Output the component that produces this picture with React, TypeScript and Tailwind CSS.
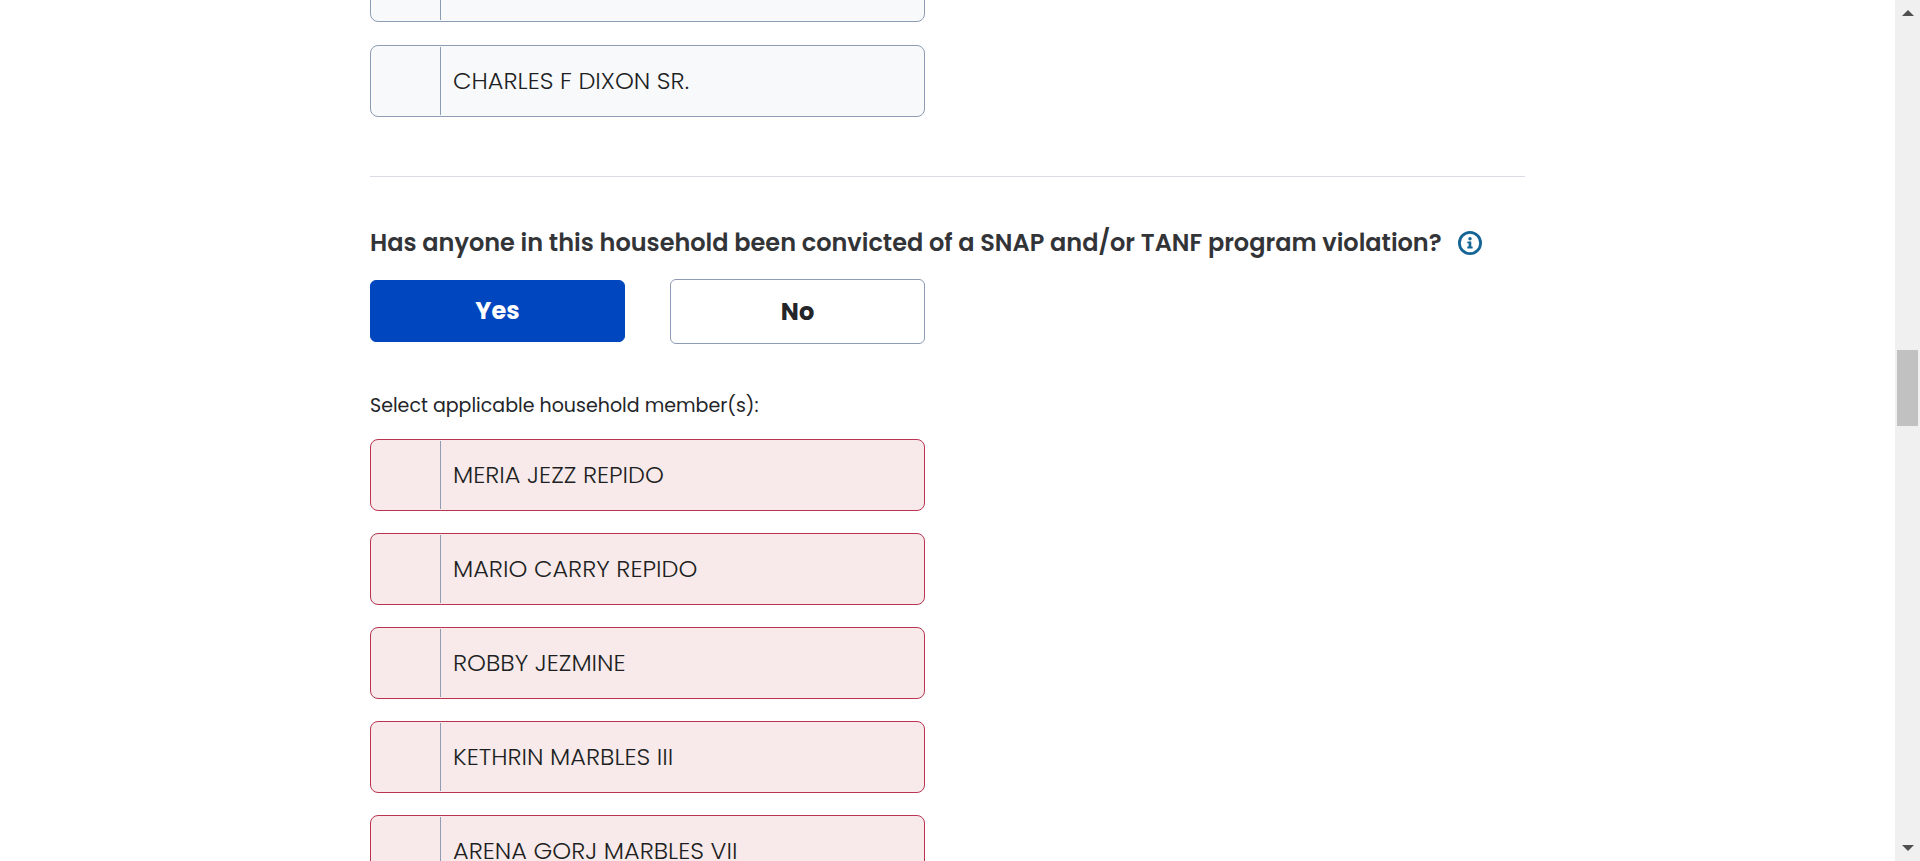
import { useState } from "react";

type MemberCardProps = {
  name: string;
  invalid?: boolean;
};

function MemberCard({ name, invalid = false }: MemberCardProps) {
  const tone = invalid
    ? "border-[#ba3452] bg-[#f8eaea]"
    : "border-[#8e9bb5] bg-[#f8f9fb]";
  return (
    <label
      className={`flex h-[72px] cursor-pointer items-stretch rounded-lg border py-px text-2xl text-[#1d1f23] ${tone}`}
    >
      <input
        type="checkbox"
        className="w-[70px] shrink-0 appearance-none border-r border-[#8e9bb5] checked:bg-[#0046be]"
      />
      <span className="self-center pl-3">{name}</span>
    </label>
  );
}

function InfoIcon() {
  return (
    <svg viewBox="0 0 24 24" className="size-6" fill="none" aria-hidden="true">
      <circle cx="12" cy="12" r="10.6" stroke="#146496" strokeWidth="2.8" />
      <circle cx="12" cy="7.8" r="1.7" fill="#146496" />
      <path d="M9.3 10.4h4v5.2h1.3v1.8H9.3v-1.8h1.3v-3.4H9.3z" fill="#146496" />
    </svg>
  );
}

function ScrollTrack() {
  return (
    <div className="flex w-[25px] shrink-0 flex-col items-center justify-between bg-[#f0f0f0] py-2.5" aria-hidden="true">
      <svg viewBox="0 0 12 6" className="h-1.5 w-3" fill="#505050">
        <path d="M0 6 6 0l6 6z" />
      </svg>
      <div className="flex w-full flex-1 flex-col items-center">
        <div className="grow-[334]" />
        <div className="h-[76px] w-[21px] bg-[#c1c1c1]" />
        <div className="grow-[419]" />
      </div>
      <svg viewBox="0 0 12 6" className="h-1.5 w-3" fill="#505050">
        <path d="m0 0 6 6 6-6z" />
      </svg>
    </div>
  );
}

const members = [
  "MERIA JEZZ REPIDO",
  "MARIO CARRY REPIDO",
  "ROBBY JEZMINE",
  "KETHRIN MARBLES III",
  "ARENA GORJ MARBLES VII",
];

export default function App() {
  const [convicted, setConvicted] = useState(true);
  const selected = "mt-px mb-0.5 border-[#0046be] bg-[#0046be] text-white";
  const idle = "border-[#8e9bb5] bg-white text-[#232529]";

  return (
    <div className="flex h-screen overflow-hidden bg-white font-['Poppins','Inter',sans-serif] font-light">
      <main className="min-w-0 flex-1 overflow-hidden">
        <div className="mx-auto max-w-[1155px]">
          <div className="-mt-[50px] grid grid-cols-2 gap-x-[45px]">
            <div className="flex flex-col gap-[23px]">
              <MemberCard name="" />
              <MemberCard name="CHARLES F DIXON SR." />
            </div>
          </div>

          <hr className="mt-[59px] border-[#d9dce6]" />

          <div className="mt-12 flex items-center gap-4">
            <h2 className="text-2xl leading-9 font-semibold text-[#323437]">
              Has anyone in this household been convicted of a SNAP and/or TANF program violation?
            </h2>
            <button type="button" aria-label="Info" className="shrink-0">
              <InfoIcon />
            </button>
          </div>

          <div className="mt-[18px] grid grid-cols-2 gap-x-[45px]">
            <div className="grid h-[65px] grid-cols-2 gap-x-[45px] text-2xl font-bold">
              <button
                type="button"
                aria-pressed={convicted}
                onClick={() => setConvicted(true)}
                className={`rounded-md border ${convicted ? selected : idle}`}
              >
                Yes
              </button>
              <button
                type="button"
                aria-pressed={!convicted}
                onClick={() => setConvicted(false)}
                className={`rounded-md border ${convicted ? idle : selected}`}
              >
                No
              </button>
            </div>
          </div>

          <fieldset className="mt-12 grid grid-cols-2 gap-x-[45px]">
            <legend className="mb-[19px] text-[19px] leading-7 font-normal text-[#232529]">
              Select applicable household member(s):
            </legend>
            <div className="flex flex-col gap-[22px]">
              {members.map((name) => (
                <MemberCard key={name} name={name} invalid />
              ))}
            </div>
          </fieldset>
        </div>
      </main>
      <ScrollTrack />
    </div>
  );
}
